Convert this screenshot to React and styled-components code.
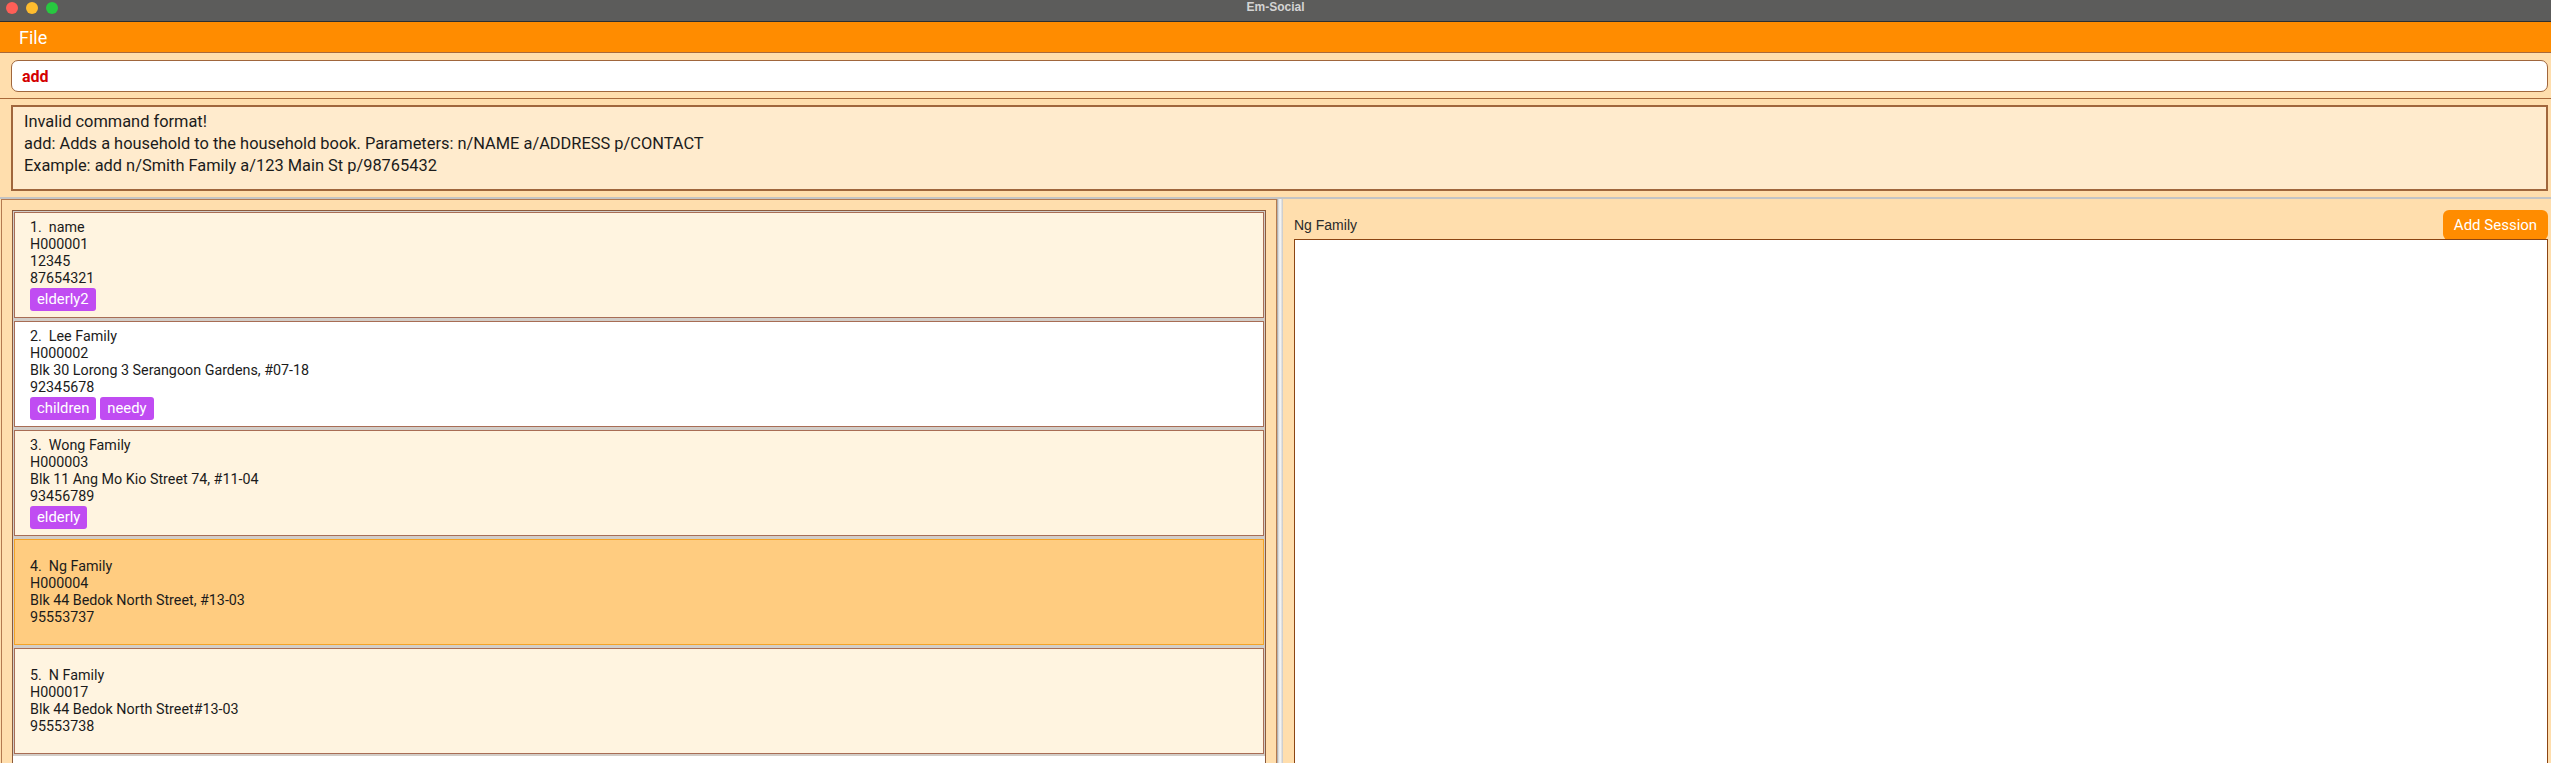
import React from 'react';
import styled, { createGlobalStyle } from 'styled-components';

const GlobalStyle = createGlobalStyle`
  html, body {
    margin: 0;
    padding: 0;
    background: #ffdead;
  }
  * {
    box-sizing: border-box;
  }
`;

const Window = styled.div`
  width: 2551px;
  height: 763px;
  display: flex;
  flex-direction: column;
  overflow: hidden;
  font-family: Roboto, 'Liberation Sans', sans-serif;
  color: #1b1b1b;
  background: #ffdead;
`;

const TitleBar = styled.div`
  height: 22px;
  flex: none;
  display: grid;
  grid-template-columns: 1fr auto 1fr;
  align-items: start;
  background: #5c5c5b;
  border-bottom: 1px solid #2e2e2e;
`;

const Lights = styled.div`
  display: flex;
  gap: 8px;
  padding: 2px 0 0 6px;
`;

const Light = styled.span`
  width: 12px;
  height: 12px;
  border-radius: 50%;
  background: ${(p) => p.color};
`;

const Title = styled.div`
  font-family: 'Liberation Sans', sans-serif;
  font-size: 12px;
  font-weight: bold;
  line-height: 14px;
  color: #d4d4d4;
`;

const MenuBar = styled.div`
  height: 31px;
  flex: none;
  display: flex;
  align-items: center;
  padding-left: 19px;
  background: #ff8c00;
  border-bottom: 1px solid #a8693a;
`;

const MenuItem = styled.span`
  font-size: 18px;
  color: #fff;
`;

const CommandBox = styled.div`
  flex: none;
  padding: 7px 3px 6px 11px;
  border-bottom: 1px solid #a8693a;
`;

const CommandInput = styled.input`
  display: block;
  width: 100%;
  height: 32px;
  padding: 0 10px;
  border: 1px solid #a0663c;
  border-radius: 7px;
  background: #fff;
  font-family: Roboto, 'Liberation Sans', sans-serif;
  font-size: 16px;
  font-weight: bold;
  color: #d40000;
  outline: none;
`;

const ResultArea = styled.div`
  flex: none;
  padding: 6px 3px 6px 11px;
  border-bottom: 2px solid #c4c4c4;
`;

const ResultBox = styled.div`
  height: 86px;
  padding: 4px 11px;
  border: 2px solid #a0663c;
  background: #ffebcd;
  font-size: 16.4px;
  line-height: 22px;
`;

const Split = styled.div`
  flex: 1;
  min-height: 0;
  display: flex;
  padding-left: 1px;
`;

const LeftPane = styled.div`
  width: 1276px;
  flex: none;
  display: flex;
  padding: 10px 10px 0;
  border: 1px solid #b47a50;
  border-bottom: none;
`;

const HouseholdList = styled.div`
  flex: 1;
  display: flex;
  flex-direction: column;
  overflow: hidden;
  border: 1px solid #8b5a3c;
  border-bottom: none;
  background: #fff;
`;

const Cell = styled.div`
  flex: none;
  padding: 1px 1px 2px;
  background: #d2cdc8;
`;

const Card = styled.div`
  height: 106px;
  display: flex;
  flex-direction: column;
  justify-content: center;
  padding: 0 15px;
  border: 1px solid ${(p) => (p.selected ? '#f4a326' : '#a86d55')};
  background: ${(p) => (p.selected ? '#ffcc80' : p.even ? '#ffffff' : '#fff4e0')};
  font-size: 14.3px;
  line-height: 17px;
`;

const NameRow = styled.div`
  display: flex;
`;

const Index = styled.span`
  margin-right: 7px;
`;

const Tags = styled.div`
  display: flex;
  gap: 4px;
  margin-top: 1px;
`;

const Tag = styled.span`
  height: 23px;
  padding: 0 7px;
  border-radius: 3px;
  background: #c04cf2;
  color: #fff;
  font-size: 14.8px;
  line-height: 23px;
`;

const Divider = styled.div`
  width: 6px;
  flex: none;
  background: linear-gradient(to right, #9c9c9c, #e6e6e6 30%, #f6f6f6 55%, #c6c6c6);
`;

const RightPane = styled.div`
  flex: 1;
  display: flex;
  flex-direction: column;
  padding: 11px 3px 0 11px;
`;

const SessionHeader = styled.div`
  height: 30px;
  display: flex;
  align-items: center;
  justify-content: space-between;
`;

const HouseholdName = styled.span`
  font-family: 'Liberation Sans', sans-serif;
  font-size: 14px;
  color: #2a2a2a;
`;

const AddButton = styled.button`
  width: 105px;
  height: 30px;
  border: none;
  border-radius: 6px;
  background: #ff8c00;
  color: #fff;
  font-family: Roboto, 'Liberation Sans', sans-serif;
  font-size: 15px;
  padding: 0;
`;

const SessionBox = styled.div`
  flex: 1;
  margin-top: -1px;
  border: 1px solid #8b4513;
  border-bottom: none;
  background: #fff;
`;

const households = [
  { name: 'name', id: 'H000001', address: '12345', contact: '87654321', tags: ['elderly2'] },
  {
    name: 'Lee Family',
    id: 'H000002',
    address: 'Blk 30 Lorong 3 Serangoon Gardens, #07-18',
    contact: '92345678',
    tags: ['children', 'needy'],
  },
  {
    name: 'Wong Family',
    id: 'H000003',
    address: 'Blk 11 Ang Mo Kio Street 74, #11-04',
    contact: '93456789',
    tags: ['elderly'],
  },
  { name: 'Ng Family', id: 'H000004', address: 'Blk 44 Bedok North Street, #13-03', contact: '95553737', tags: [] },
  { name: 'N Family', id: 'H000017', address: 'Blk 44 Bedok North Street#13-03', contact: '95553738', tags: [] },
];

const SELECTED = 3;

export default function App() {
  return (
    <>
      <GlobalStyle />
      <Window>
        <TitleBar>
          <Lights>
            <Light color="#fe5f57" />
            <Light color="#febc2e" />
            <Light color="#28c840" />
          </Lights>
          <Title>Em-Social</Title>
          <div />
        </TitleBar>
        <MenuBar>
          <MenuItem>File</MenuItem>
        </MenuBar>
        <CommandBox>
          <CommandInput value="add" readOnly />
        </CommandBox>
        <ResultArea>
          <ResultBox>
            <div>Invalid command format!</div>
            <div>add: Adds a household to the household book. Parameters: n/NAME a/ADDRESS p/CONTACT</div>
            <div>Example: add n/Smith Family a/123 Main St p/98765432</div>
          </ResultBox>
        </ResultArea>
        <Split>
          <LeftPane>
            <HouseholdList>
              {households.map((h, i) => (
                <Cell key={h.id}>
                  <Card selected={i === SELECTED} even={i % 2 === 1}>
                    <NameRow>
                      <Index>{i + 1}.</Index>
                      <span>{h.name}</span>
                    </NameRow>
                    <div>{h.id}</div>
                    <div>{h.address}</div>
                    <div>{h.contact}</div>
                    {h.tags.length > 0 && (
                      <Tags>
                        {h.tags.map((t) => (
                          <Tag key={t}>{t}</Tag>
                        ))}
                      </Tags>
                    )}
                  </Card>
                </Cell>
              ))}
            </HouseholdList>
          </LeftPane>
          <Divider />
          <RightPane>
            <SessionHeader>
              <HouseholdName>Ng Family</HouseholdName>
              <AddButton>Add Session</AddButton>
            </SessionHeader>
            <SessionBox />
          </RightPane>
        </Split>
      </Window>
    </>
  );
}
